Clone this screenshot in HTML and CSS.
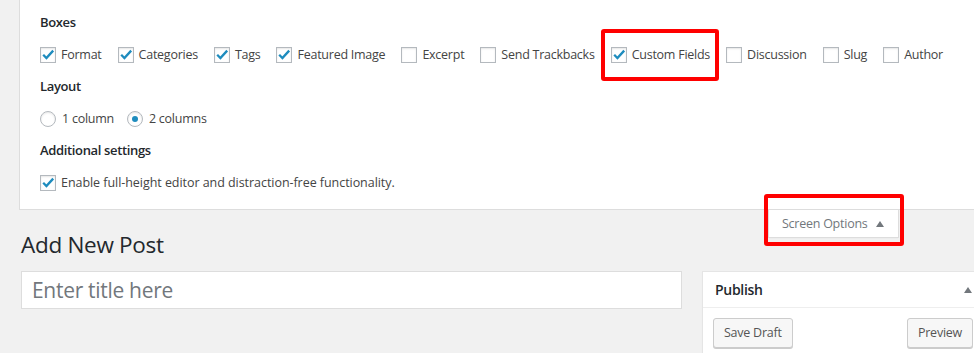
FILE: index.html
```html
<!DOCTYPE html>
<html lang="en">
<head>
    <meta charset="UTF-8">
    <meta name="viewport" content="width=device-width, initial-scale=1.0">
    <title>Add New Post</title>
    <link rel="stylesheet" href="styles.css">
</head>
<body>
    <div id="screen-meta">
        <div class="meta-section">
            <p class="legend">Boxes</p>
            <div class="option-row">
                <label class="option"><span class="check checked"><svg viewBox="0 0 16 16"><path d="M3.2 7.8 L6.4 11 L13.2 3.6"/></svg></span>Format</label>
                <label class="option"><span class="check checked"><svg viewBox="0 0 16 16"><path d="M3.2 7.8 L6.4 11 L13.2 3.6"/></svg></span>Categories</label>
                <label class="option"><span class="check checked"><svg viewBox="0 0 16 16"><path d="M3.2 7.8 L6.4 11 L13.2 3.6"/></svg></span>Tags</label>
                <label class="option"><span class="check checked"><svg viewBox="0 0 16 16"><path d="M3.2 7.8 L6.4 11 L13.2 3.6"/></svg></span>Featured Image</label>
                <label class="option"><span class="check"></span>Excerpt</label>
                <label class="option"><span class="check"></span>Send Trackbacks</label>
                <label class="option highlight"><span class="check checked"><svg viewBox="0 0 16 16"><path d="M3.2 7.8 L6.4 11 L13.2 3.6"/></svg></span>Custom Fields</label>
                <label class="option"><span class="check"></span>Discussion</label>
                <label class="option"><span class="check"></span>Slug</label>
                <label class="option"><span class="check"></span>Author</label>
            </div>
        </div>

        <div class="meta-section">
            <p class="legend">Layout</p>
            <div class="option-row radios">
                <label class="option"><span class="radio"></span>1 column</label>
                <label class="option"><span class="radio selected"></span>2 columns</label>
            </div>
        </div>

        <div class="meta-section">
            <p class="legend">Additional settings</p>
            <div class="option-row">
                <label class="option wide"><span class="check checked"><svg viewBox="0 0 16 16"><path d="M3.2 7.8 L6.4 11 L13.2 3.6"/></svg></span>Enable full-height editor and distraction-free functionality.</label>
            </div>
        </div>
    </div>

    <div class="wrap">
        <div class="screen-tab highlight-tab">
            Screen Options
            <svg class="arrow" viewBox="0 0 8 6"><path d="M0 6 L4 0 L8 6 Z"/></svg>
        </div>

        <h1 class="page-title">Add New Post</h1>

        <div class="post-body">
            <div class="post-main">
                <input class="title-input" type="text" placeholder="Enter title here">
            </div>

            <div class="postbox">
                <div class="postbox-header">
                    <h2>Publish</h2>
                    <svg class="arrow" viewBox="0 0 8 6"><path d="M0 6 L4 0 L8 6 Z"/></svg>
                </div>
                <div class="postbox-actions">
                    <button class="button">Save Draft</button>
                    <button class="button">Preview</button>
                </div>
            </div>
        </div>
    </div>
</body>
</html>
```

FILE: styles.css
```css
:root {
    --page-bg: #f1f1f1;
    --border-color: #dddddd;
    --text-color: #23282d;
    --label-color: #444444;
    --muted-color: #72777c;
    --input-border: #b4b9be;
    --accent-color: #1e8cbe;
    --mark-color: #ff0000;
}

html, body {
    overflow: hidden;
}

body {
    margin: 0;
    background-color: var(--page-bg);
    color: var(--text-color);
    font-family: "Open Sans", "Noto Sans", sans-serif;
    font-size: 12.5px;
    width: 974px;
    height: 353px;
}

#screen-meta {
    margin-left: 19px;
    background-color: #ffffff;
    border-left: 1px solid var(--border-color);
    border-bottom: 1px solid var(--border-color);
    padding: 12px 20px 16px;
    display: flex;
    flex-direction: column;
    gap: 11px;
}

.meta-section {
    display: flex;
    flex-direction: column;
    gap: 13px;
}

.legend {
    margin: 0;
    font-size: 13px;
    font-weight: 600;
    line-height: 20px;
    letter-spacing: -0.35px;
    color: var(--text-color);
}

.option-row {
    display: flex;
    gap: 16px;
    line-height: 20px;
    color: var(--label-color);
}

.option-row.radios {
    gap: 13px;
}

.option {
    display: flex;
    align-items: center;
    gap: 5px;
    white-space: nowrap;
    letter-spacing: -0.25px;
}

.option.wide {
    letter-spacing: -0.05px;
}

.check,
.radio {
    width: 16px;
    height: 16px;
    box-sizing: border-box;
    border: 1px solid var(--input-border);
    background-color: #ffffff;
    box-shadow: inset 0 1px 2px rgba(0, 0, 0, 0.1);
    display: flex;
    align-items: center;
    justify-content: center;
    flex-shrink: 0;
}

.radio {
    border-radius: 50%;
    margin-right: 1px;
}

.radio.selected::before {
    content: "";
    width: 6px;
    height: 6px;
    border-radius: 50%;
    background-color: var(--accent-color);
}

.check svg {
    width: 16px;
    height: 16px;
    overflow: visible;
}

.check svg path {
    fill: none;
    stroke: var(--accent-color);
    stroke-width: 2.3;
}

.highlight {
    position: relative;
}

.highlight::after {
    content: "";
    position: absolute;
    top: -16px;
    bottom: -16px;
    left: -10px;
    right: -9px;
    border: 4px solid var(--mark-color);
    border-radius: 3px;
}

.wrap {
    margin-left: 21px;
}

.screen-tab {
    float: right;
    margin-right: 75px;
    width: 131px;
    height: 28px;
    padding: 0 0 0 13px;
    box-sizing: border-box;
    display: flex;
    align-items: center;
    gap: 8px;
    background-color: #ffffff;
    border: 1px solid var(--border-color);
    border-top: none;
    box-shadow: 0 1px 1px -1px rgba(0, 0, 0, 0.1);
    color: var(--muted-color);
    letter-spacing: -0.25px;
    position: relative;
}

.screen-tab .arrow {
    width: 8px;
    height: 6px;
    fill: var(--muted-color);
}

.highlight-tab::after {
    content: "";
    position: absolute;
    top: -16px;
    bottom: -9px;
    left: -5px;
    right: -6px;
    border: 4px solid var(--mark-color);
    border-radius: 3px;
}

.page-title {
    margin: 0;
    padding: 20px 0 12px;
    font-size: 22.5px;
    font-weight: 400;
    line-height: 29px;
    letter-spacing: -0.3px;
    color: var(--text-color);
}

.post-body {
    display: flex;
    gap: 20px;
    align-items: flex-start;
}

.post-main {
    width: 661px;
    flex-shrink: 0;
}

.title-input {
    width: 100%;
    height: 38px;
    box-sizing: border-box;
    margin: 0;
    padding: 3px 10px;
    border: 1px solid var(--border-color);
    font-family: inherit;
    font-size: 21px;
    letter-spacing: -0.3px;
    color: var(--text-color);
    background-color: #ffffff;
    outline: none;
}

.title-input::placeholder {
    color: var(--muted-color);
}

.postbox {
    width: 280px;
    flex-shrink: 0;
    background-color: #ffffff;
    border: 1px solid #e5e5e5;
    box-shadow: 0 1px 1px rgba(0, 0, 0, 0.04);
}

.postbox-header {
    height: 35px;
    display: flex;
    align-items: center;
    justify-content: space-between;
    padding: 0 11px 0 12px;
    border-bottom: 1px solid #eeeeee;
}

.postbox-header h2 {
    margin: 0;
    font-size: 14px;
    font-weight: 600;
    color: var(--text-color);
    letter-spacing: -0.3px;
}

.postbox-header .arrow {
    width: 8px;
    height: 6px;
    fill: var(--muted-color);
}

.postbox-actions {
    display: flex;
    justify-content: space-between;
    padding: 10px 10px;
}

.button {
    height: 30px;
    padding: 0 10px 1px;
    font-family: inherit;
    font-size: 12.5px;
    color: #555555;
    background-color: #f7f7f7;
    border: 1px solid #cccccc;
    border-radius: 3px;
    box-shadow: 0 1px 0 #cccccc;
    letter-spacing: -0.25px;
    cursor: pointer;
}
```
